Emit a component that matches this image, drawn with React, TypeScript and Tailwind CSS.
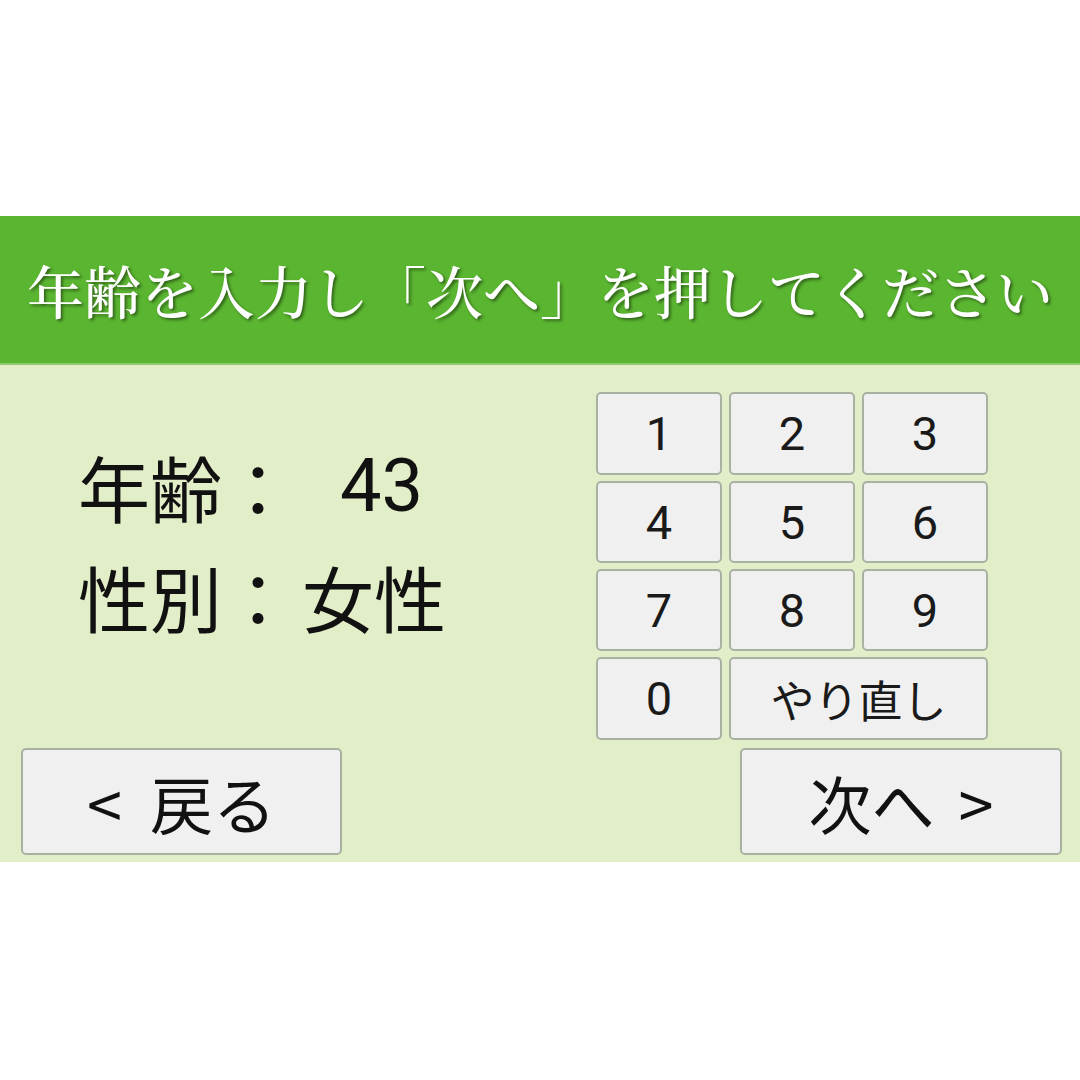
import React from "react";

const jp = "font-['Noto_Sans_CJK_JP','Noto_Sans',sans-serif]";
const num = "font-['Roboto','Noto_Sans_CJK_JP',sans-serif]";

function Key({ label, wide }: { label: string; wide?: boolean }) {
  const isNum = /^[0-9]$/.test(label);
  return (
    <div
      className={`flex items-center justify-center rounded-[5px] border-2 border-[#a9b1a3] bg-[#f0f0f0] leading-none text-[#1a1a1a] ${isNum ? `${num} text-[47px]` : `${jp} text-[44px]`} ${wide ? "col-span-2" : ""}`}
    >
      {label}
    </div>
  );
}

export default function App() {
  const keys = ["1", "2", "3", "4", "5", "6", "7", "8", "9"];
  return (
    <div className="flex h-[1080px] w-[1080px] flex-col bg-white">
      <div className="h-[216px]" />
      <div className="flex h-[149px] items-center justify-center border-b-2 border-[#8fcb6e] bg-[#5ab530]">
        <div className="whitespace-nowrap text-[57px] font-medium leading-none text-white font-['Noto_Serif_CJK_JP','Noto_Sans_CJK_JP',serif] [text-shadow:2px_2px_3px_rgba(0,0,0,0.45)]">
          年齢を入力し「次へ」を押してください
        </div>
      </div>
      <div className="flex h-[497px] flex-col bg-[#e2eec7] pl-[21px] pr-[18px]">
        <div className="flex justify-between">
          <div className={`pl-[57px] pt-[66px] text-[72px] leading-[110px] text-[#111] ${jp}`}>
            <div className="flex whitespace-nowrap">
              <span>年齢</span>
              <span>：</span>
              <span className={`ml-[46px] text-[74px] ${num}`}>43</span>
            </div>
            <div className="flex whitespace-nowrap">
              <span>性別</span>
              <span>：</span>
              <span className="ml-[8px]">女性</span>
            </div>
          </div>
          <div className="mr-[74px] mt-[27px] grid grid-cols-[126px_126px_126px] grid-rows-[83px_82px_82px_83px] gap-x-[7px] gap-y-[6px]">
            {keys.map((k) => (
              <Key key={k} label={k} />
            ))}
            <Key label="0" />
            <Key label="やり直し" wide />
          </div>
        </div>
        <div className="mt-[8px] flex justify-between">
          <div className={`flex h-[107px] w-[321px] items-center justify-center rounded-[5px] border-2 border-[#a9b1a3] bg-[#f0f0f0] text-[63px] leading-none text-[#111] ${jp}`}>
            <span>&lt;</span>
            <span className="ml-[28px]">戻る</span>
          </div>
          <div className={`flex h-[107px] w-[322px] items-center justify-center rounded-[5px] border-2 border-[#a9b1a3] bg-[#f0f0f0] text-[63px] leading-none text-[#111] ${jp}`}>
            <span>次へ</span>
            <span className="ml-[24px]">&gt;</span>
          </div>
        </div>
      </div>
    </div>
  );
}
